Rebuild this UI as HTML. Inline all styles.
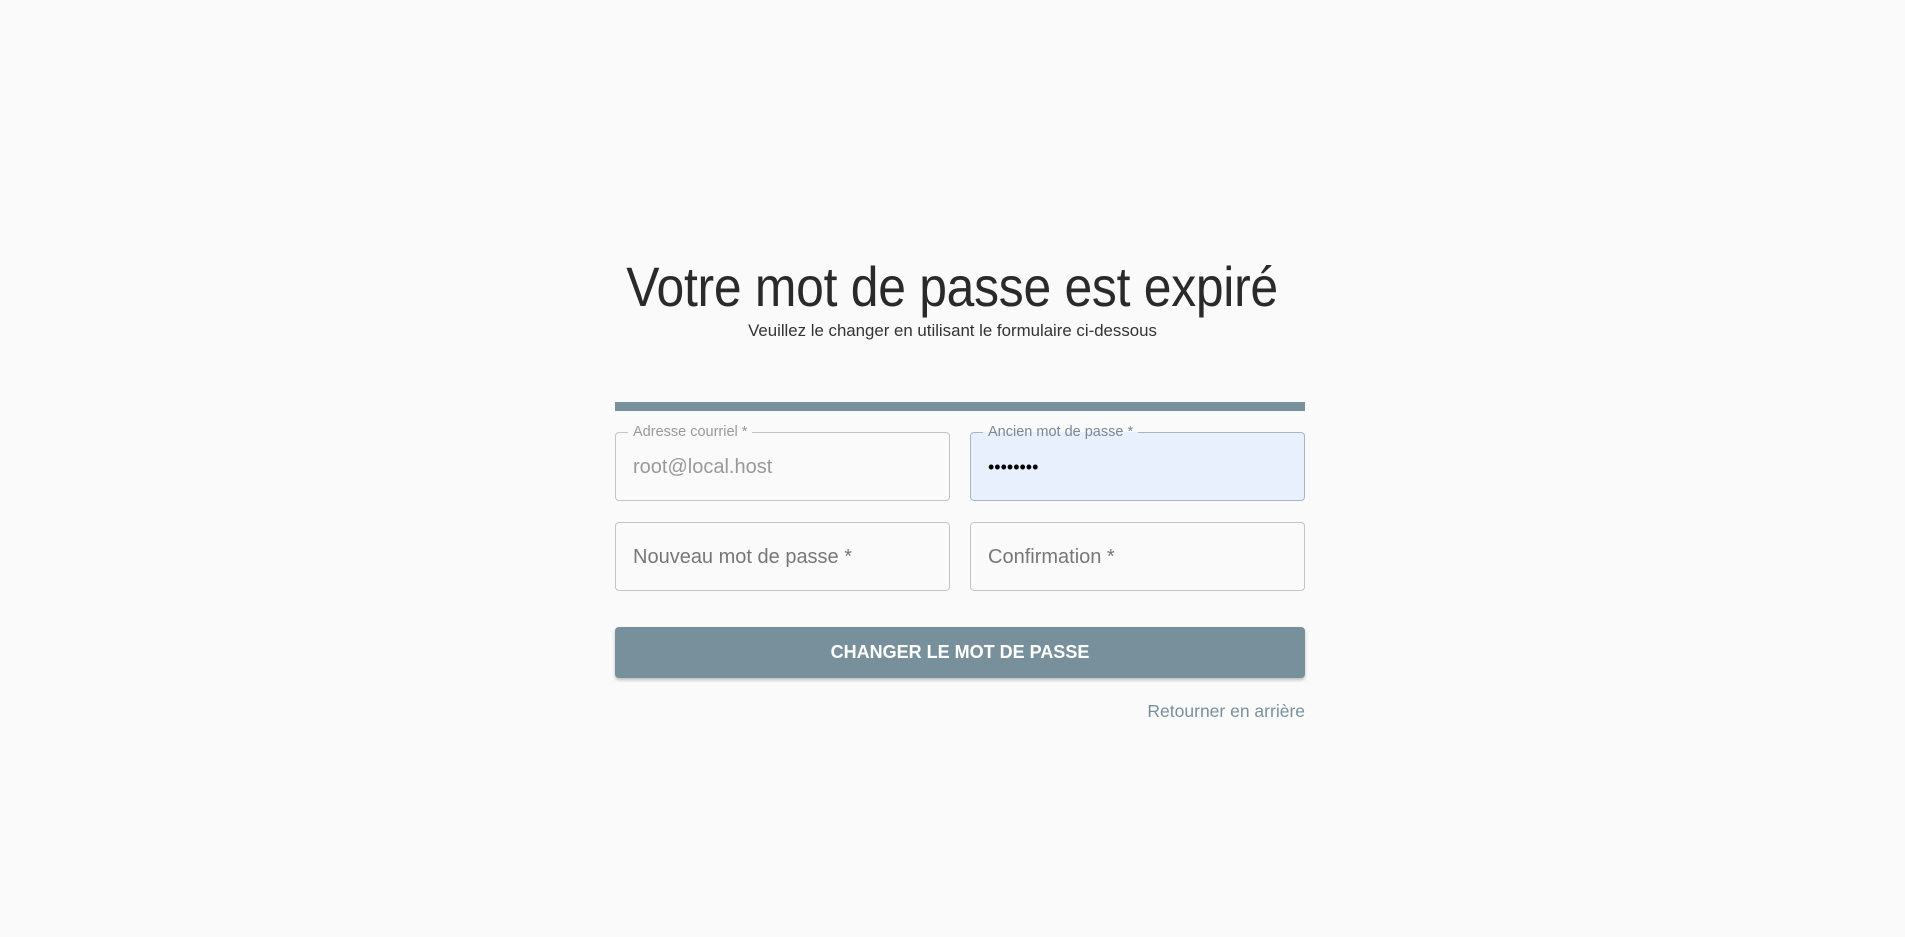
<!DOCTYPE html>
<html><head><meta charset="utf-8"><style>
*{box-sizing:border-box;margin:0;padding:0}
body{width:1905px;height:937px;background:#fafafa;font-family:"Liberation Sans",Arial,sans-serif;position:relative;overflow:hidden}
.abs{position:absolute}
h1{position:absolute;left:0;width:1905px;top:252px;text-align:center;font-weight:normal;font-size:56px;line-height:70px;color:#2a2a2a}
h1 span{display:inline-block;transform:scaleX(0.89);letter-spacing:-0.3px}
.sub{left:0;width:1905px;top:320px;text-align:center;font-size:17px;color:#333;line-height:22px}
.sub span{display:inline-block;transform:scaleX(0.99)}
.bar{left:615px;top:402px;width:690px;height:9px;background:#78909c}
.f{position:absolute;height:69px;border:1px solid #c4c4c4;border-radius:4px}
.f .l{position:absolute;top:-10px;left:12px;padding:0 5px;background:#fafafa;font-size:14.5px;color:#999;line-height:18px}
.f .v{position:absolute;left:17px;top:23px;font-size:20px;line-height:22px;color:#999}
.f .p{position:absolute;left:17px;top:23px;font-size:20px;line-height:22px;color:#777}
.btn{left:615px;top:627px;width:690px;height:51px;background:#78909c;border-radius:4px;box-shadow:0 2px 3px rgba(0,0,0,.25);color:#fff;font-weight:bold;font-size:18px;text-align:center;line-height:51px}
.lnk{right:600px;top:700px;font-size:17.5px;color:#78909c;line-height:22px}
</style></head><body>
<h1><span>Votre mot de passe est expiré</span></h1>
<div class="abs sub"><span>Veuillez le changer en utilisant le formulaire ci-dessous</span></div>
<div class="abs bar"></div>
<div class="f" style="left:615px;top:432px;width:335px"><div class="l">Adresse courriel *</div><div class="v">root@local.host</div></div>
<div class="f" style="left:970px;top:432px;width:335px;background:#e8f0fe;border-color:#aab4c4"><div class="l" style="background:linear-gradient(#fafafa 50%,#e8f0fe 50%);color:#7a8796">Ancien mot de passe *</div><div class="v" style="color:#000;letter-spacing:0px;font-size:18px">••••••••</div></div>
<div class="f" style="left:615px;top:522px;width:335px"><div class="p">Nouveau mot de passe *</div></div>
<div class="f" style="left:970px;top:522px;width:335px"><div class="p">Confirmation *</div></div>
<div class="abs btn">CHANGER LE MOT DE PASSE</div>
<div class="abs lnk">Retourner en arrière</div>
</body></html>
